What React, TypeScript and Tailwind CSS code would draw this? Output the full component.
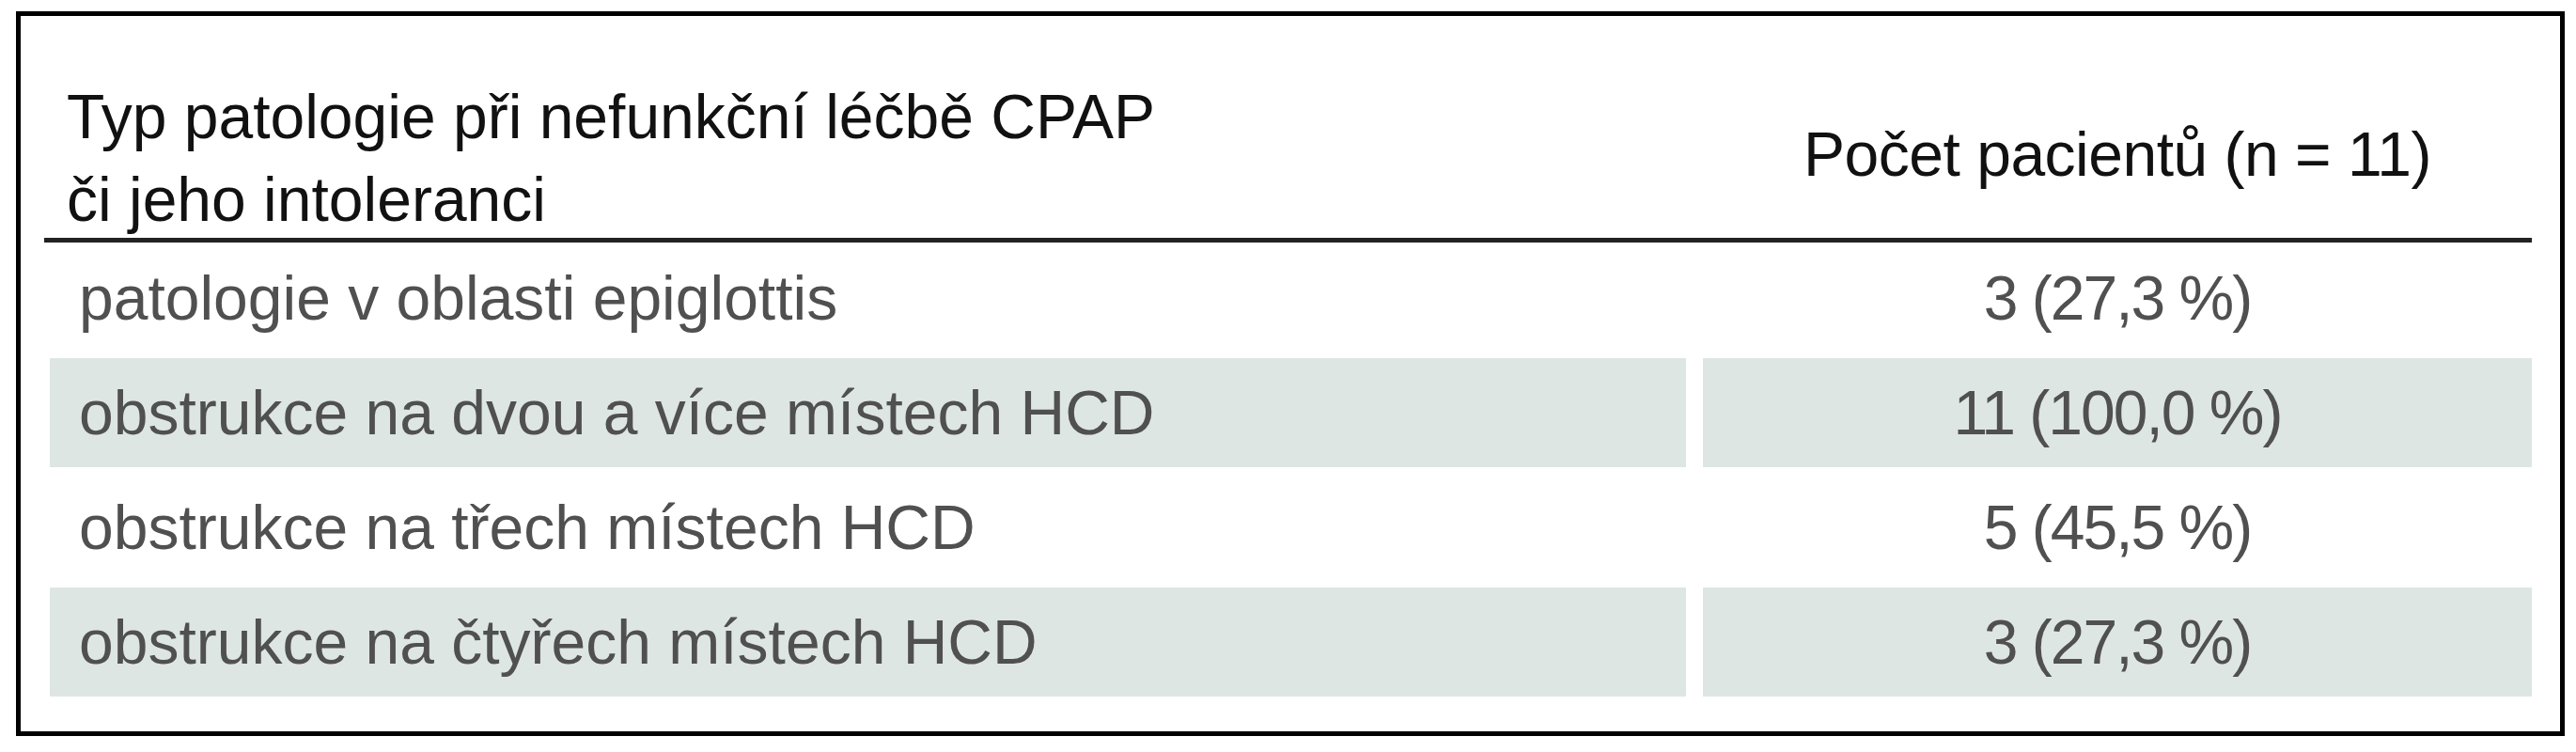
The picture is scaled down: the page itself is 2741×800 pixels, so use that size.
import React from "react"

// Tabulka: typ patologie u pacientů s nefunkční léčbou CPAP

type Row = { label: string; value: string }

const ROWS: Row[] = [
  { label: "patologie v oblasti epiglottis", value: "3 (27,3 %)" },
  { label: "obstrukce na dvou a více místech HCD", value: "11 (100,0 %)" },
  { label: "obstrukce na třech místech HCD", value: "5 (45,5 %)" },
  { label: "obstrukce na čtyřech místech HCD", value: "3 (27,3 %)" },
]

export default function App() {
  return (
    <div className="w-[2741px] h-[800px] bg-white pt-[12px] pl-[17px] font-['Liberation_Sans',Arial,sans-serif] text-[66px]">
      <div className="w-[2712px] h-[771px] border-[5px] border-black pl-[25px] pr-[30px]">
        {/* hlavička */}
        <div className="h-[241px] border-b-[5px] border-[#222] pl-[6px] grid grid-cols-[1741px_882px] gap-x-[18px] text-[#111]">
          <div className="pt-[63px] pl-[18px] leading-[88px] whitespace-nowrap">
            Typ patologie při nefunkční léčbě CPAP
            <br />
            či jeho intoleranci
          </div>
          <div className="pt-[103px] leading-[88px] text-center whitespace-nowrap tracking-[-0.5px]">Počet pacientů (n = 11)</div>
        </div>

        {/* řádky */}
        <div className="pt-[1px] pl-[6px] grid grid-cols-[1741px_882px] gap-x-[18px] gap-y-[6px] text-[#505050]">
          {ROWS.map((r, i) => {
            const shaded = i % 2 === 1 ? "bg-[#dee6e4]" : ""
            return (
              <React.Fragment key={i}>
                <div className={`h-[116px] leading-[116px] pl-[31px] whitespace-nowrap ${shaded}`}>{r.label}</div>
                <div className={`h-[116px] leading-[116px] text-center whitespace-nowrap tracking-[-2px] ${shaded}`}>{r.value}</div>
              </React.Fragment>
            )
          })}
        </div>
      </div>
    </div>
  )
}
